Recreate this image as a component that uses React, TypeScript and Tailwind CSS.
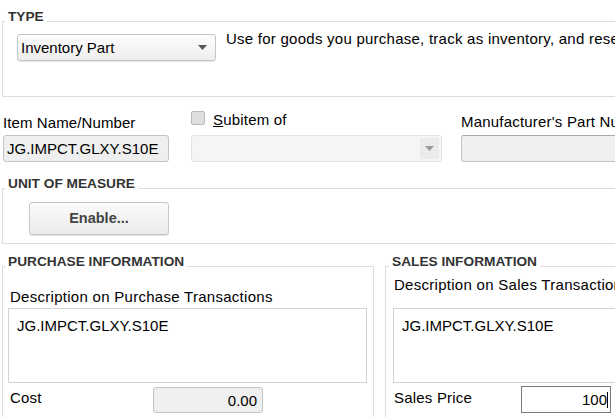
import React from 'react';

const font = "font-['Liberation_Sans',Arial,Helvetica,sans-serif]";

function Arrow({ color }: { color: string }) {
    return (
        <svg width="9" height="5" viewBox="0 0 9 5">
            <polygon points="0,0 9,0 4.5,5" fill={color} />
        </svg>
    );
}

function Legend({ children, ml }: { children: React.ReactNode; ml: string }) {
    return (
        <legend className={`${ml} px-[3px] pb-[9px] text-[13.7px] leading-[16px] font-bold text-[#333]`}>
            {children}
        </legend>
    );
}

export default function App() {
    return (
        <div className={`w-[615px] h-[417px] overflow-hidden bg-white text-[15px] leading-[17px] text-black ${font}`}>
            <div className="w-[720px] pl-[2px] pt-[9px]">
                {/* TYPE */}
                <fieldset className="w-[700px] h-[88px] border border-[#dcdcdc]">
                    <Legend ml="ml-[2px]">TYPE</Legend>
                    <div className="flex pl-[14px]">
                        <div className="w-[199px] h-[27px] flex items-center justify-between pl-[3px] pr-[8px] border border-[#c6c6c6] rounded-[3px] bg-gradient-to-b from-[#fdfdfd] to-[#eeeeee] shadow-[0_1px_0_#e6e6e6]">
                            <span>Inventory Part</span>
                            <Arrow color="#555" />
                        </div>
                        <p className="ml-[10px] -mt-[4px] tracking-[0.25px] whitespace-nowrap">Use for goods you purchase, track as inventory, and resell.</p>
                    </div>
                </fieldset>

                {/* Item row */}
                <div className="flex mt-[14px]">
                    <div className="flex flex-col pl-px pt-[3px]">
                        <span className="tracking-[0.1px]">Item Name/Number</span>
                        <div className="mt-[4px] w-[166px] h-[27px] flex items-center pl-[3px] border border-[#c3c3c3] rounded-[3px] bg-[#efefef]">
                            JG.IMPCT.GLXY.S10E
                        </div>
                    </div>
                    <div className="flex flex-col ml-[22px]">
                        <div className="flex items-start h-[24px]">
                            <span className="w-[14px] h-[14px] border border-[#b9b9b9] rounded-[2px] bg-[#dedede]"></span>
                            <span className="ml-[8px] tracking-[0.2px]"><span className="underline">S</span>ubitem of</span>
                        </div>
                        <div className="w-[251px] h-[27px] flex items-center justify-end pr-[2px] border border-[#e3e3e3] rounded-[3px] bg-[#f5f5f5]">
                            <div className="w-[19px] h-[21px] flex items-center justify-center bg-[#ebebeb]">
                                <Arrow color="#9a9a9a" />
                            </div>
                        </div>
                    </div>
                    <div className="flex flex-col ml-[19px] pt-[2px]">
                        <span className="whitespace-nowrap tracking-[0.2px]">Manufacturer's Part Number</span>
                        <div className="mt-[5px] w-[220px] h-[27px] border border-[#c3c3c3] border-t-[#a9a9a9] rounded-[3px] bg-[#efefef]"></div>
                    </div>
                </div>

                {/* UNIT OF MEASURE */}
                <fieldset className="mt-[14px] w-[700px] h-[68px] border border-[#dcdcdc]">
                    <Legend ml="ml-[2px]">UNIT OF MEASURE</Legend>
                    <div className="pl-[26px] pt-px">
                        <button className="w-[140px] h-[33px] border border-[#c6c6c6] rounded-[3px] bg-gradient-to-b from-[#fbfbfb] to-[#ebebeb] text-[14.5px] font-bold text-[#444] shadow-[0_1px_0_#e2e2e2]">
                            Enable...
                        </button>
                    </div>
                </fieldset>

                {/* PURCHASE / SALES */}
                <div className="flex mt-[10px]">
                    <fieldset className="w-[372px] h-[200px] border border-[#dcdcdc]">
                        <Legend ml="ml-[2px]">PURCHASE INFORMATION</Legend>
                        <div className="pl-[5px] pt-[9px]">
                            <p className="pl-[2px] tracking-[0.28px] whitespace-nowrap">Description on Purchase Transactions</p>
                            <div className="mt-[3px] w-[359px] h-[75px] border border-[#d2d2d2] pl-[8px] pt-[8px]">
                                JG.IMPCT.GLXY.S10E
                            </div>
                            <div className="flex items-start mt-[4px]">
                                <span className="w-[145px] pl-[2px] pt-[2px] tracking-[0.2px]">Cost</span>
                                <div className="w-[110px] h-[26px] flex items-center justify-end pr-[5px] border border-[#c3c3c3] rounded-[3px] bg-[#efefef]">
                                    0.00
                                </div>
                            </div>
                        </div>
                    </fieldset>
                    <fieldset className="ml-[11px] w-[320px] h-[200px] border border-[#dcdcdc]">
                        <Legend ml="ml-[3px]">SALES INFORMATION</Legend>
                        <div className="pl-[7px] -mt-[3px]">
                            <p className="pl-px whitespace-nowrap tracking-[0.28px]">Description on Sales Transactions</p>
                            <div className="mt-[15px] w-[300px] h-[75px] border border-[#d2d2d2] pl-[8px] pt-[8px]">
                                JG.IMPCT.GLXY.S10E
                            </div>
                            <div className="flex items-start mt-[3px]">
                                <span className="w-[128px] pl-px pt-[3px] tracking-[0.2px]">Sales Price</span>
                                <div className="w-[90px] h-[27px] flex items-center justify-end pr-[2px] border border-[#7a7a7a]">
                                    <span>100</span>
                                    <span className="w-px h-[16px] bg-black"></span>
                                </div>
                            </div>
                        </div>
                    </fieldset>
                </div>
            </div>
        </div>
    );
}
